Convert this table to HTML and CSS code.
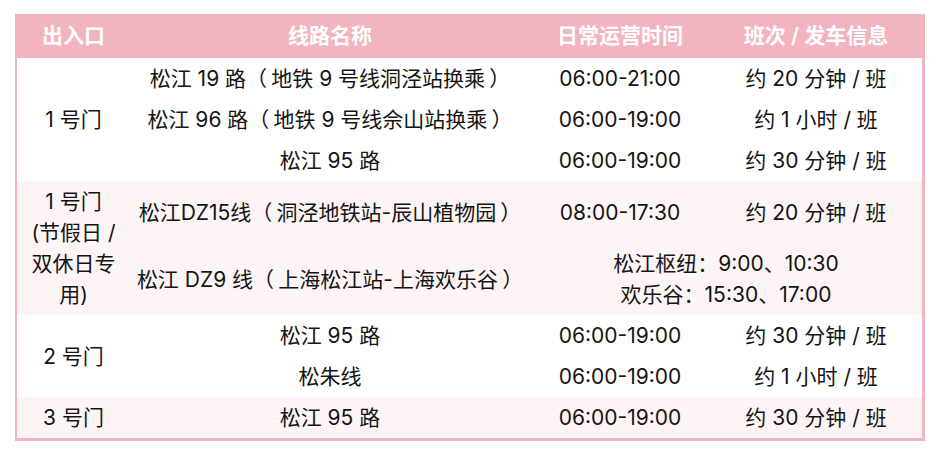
FILE: index.html
```html
<!DOCTYPE html>
<html lang="zh-CN">
<head>
<meta charset="utf-8">
<title>公交线路</title>
<link rel="stylesheet" href="styles.css">
</head>
<body>
<div class="wrap">
<table class="bus">
  <colgroup>
    <col class="c-gate"><col class="c-line"><col class="c-time"><col class="c-freq">
  </colgroup>
  <thead>
    <tr><th>出入口</th><th>线路名称</th><th>日常运营时间</th><th>班次 / 发车信息</th></tr>
  </thead>
  <tbody class="g-white">
    <tr><td rowspan="3">1 号门</td><td>松江 19 路<span class="po">（</span>地铁 9 号线洞泾站换乘<span class="pc">）</span></td><td>06:00-21:00</td><td>约 20 分钟 / 班</td></tr>
    <tr><td>松江 96 路<span class="po">（</span>地铁 9 号线佘山站换乘<span class="pc">）</span></td><td>06:00-19:00</td><td>约 1 小时 / 班</td></tr>
    <tr><td>松江 95 路</td><td>06:00-19:00</td><td>约 30 分钟 / 班</td></tr>
  </tbody>
  <tbody class="g-pink">
    <tr class="r-a"><td rowspan="2" class="tall">1 号门<br>(节假日 /<br>双休日专<br>用)</td><td>松江DZ15线<span class="po">（</span>洞泾地铁站-辰山植物园<span class="pc">）</span></td><td>08:00-17:30</td><td>约 20 分钟 / 班</td></tr>
    <tr class="r-b"><td>松江 DZ9 线<span class="po">（</span>上海松江站-上海欢乐谷<span class="pc">）</span></td><td colspan="2">松江枢纽：9:00、10:30<br>欢乐谷：15:30、17:00</td></tr>
  </tbody>
  <tbody class="g-white">
    <tr><td rowspan="2">2 号门</td><td>松江 95 路</td><td>06:00-19:00</td><td>约 30 分钟 / 班</td></tr>
    <tr><td>松朱线</td><td>06:00-19:00</td><td>约 1 小时 / 班</td></tr>
  </tbody>
  <tbody class="g-pink">
    <tr><td>3 号门</td><td>松江 95 路</td><td>06:00-19:00</td><td>约 30 分钟 / 班</td></tr>
  </tbody>
</table>
</div>
</body>
</html>
```
FILE: styles.css
```css
html, body {
  margin: 0;
  background: #ffffff;
}
.wrap {
  padding: 14px 15px;
}
.bus {
  width: 910px;
  table-layout: fixed;
  border-collapse: separate;
  border-spacing: 0;
  border: 2px solid #efb6c2;
  border-top: 0;
  border-right-width: 3px;
  border-bottom-width: 3px;
  font-family: "Inter", "Noto Sans CJK SC", sans-serif;
  font-size: 21px;
  color: #141414;
}
.c-gate { width: 113px; }
.c-line { width: 400px; }
.c-time { width: 180px; }
.c-freq { width: 212px; }
.bus th {
  height: 44px;
  padding: 0;
  background: #f2b5bf;
  color: #ffffff;
  font-weight: 600;
  text-align: center;
  vertical-align: middle;
  line-height: 30px;
}
.bus td {
  padding: 5px 4px;
  line-height: 31px;
  text-align: center;
  vertical-align: middle;
  white-space: nowrap;
}
.bus td.tall {
  padding: 4px 2px;
}
.po {
  margin-right: 0.2em;
}
.pc {
  margin-left: 0.2em;
}
.g-white td { background: #ffffff; }
.g-pink td { background: #fdf4f5; }
.r-a { height: 62px; }
.r-b { height: 70px; }
```
